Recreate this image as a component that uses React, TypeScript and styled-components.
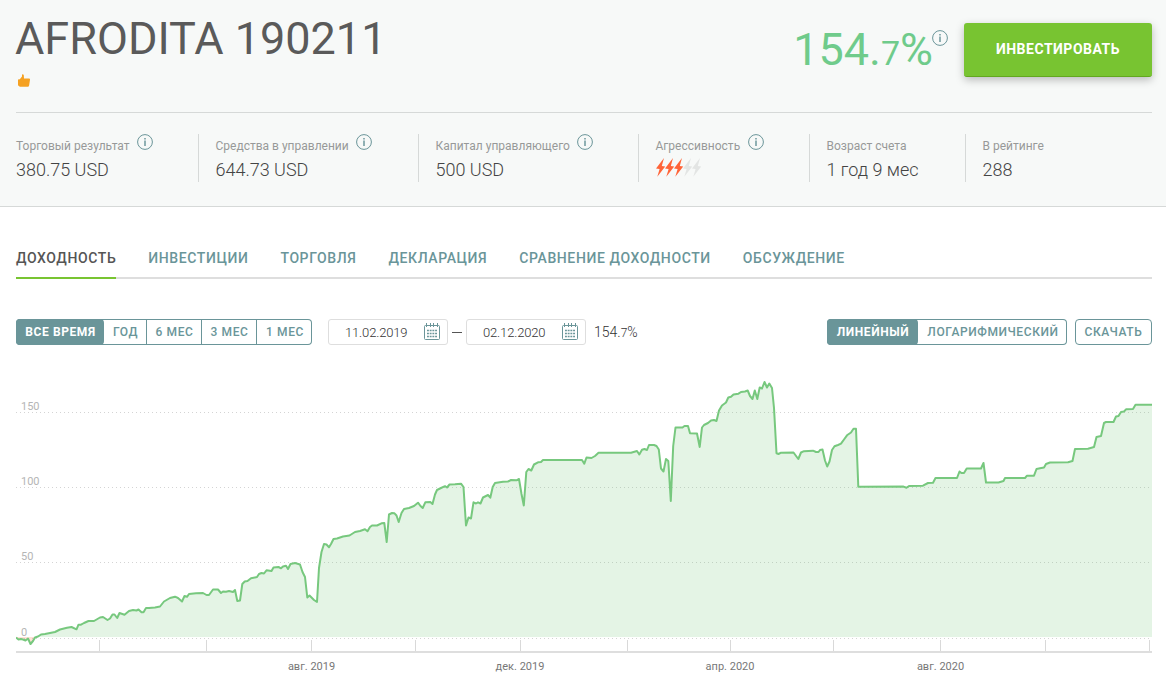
import { useState } from "react";
import styled, { createGlobalStyle } from "styled-components";

const stats = [
  { label: "Торговый результат", value: "380.75 USD", width: 182, info: true },
  { label: "Средства в управлении", value: "644.73 USD", width: 220, info: true },
  { label: "Капитал управляющего", value: "500 USD", width: 220, info: true },
  { label: "Агрессивность", level: 3, width: 171, info: true },
  { label: "Возраст счета", value: "1 год 9 мес", width: 156 },
  { label: "В рейтинге", value: "288", width: 187 },
];

const tabs = [
  "Доходность",
  "Инвестиции",
  "Торговля",
  "Декларация",
  "Сравнение доходности",
  "Обсуждение",
];

const periods = [
  { label: "Все время", width: 88 },
  { label: "Год", width: 43 },
  { label: "6 мес", width: 55 },
  { label: "3 мес", width: 55 },
  { label: "1 мес", width: 55 },
];

const scales = [
  { label: "Линейный", width: 91 },
  { label: "Логарифмический", width: 149 },
];

const CHART_LEFT = 16;
const CHART_TOP = 366;
const ZERO_Y = 637;

const line: [number, number][] = [
  [16, 637.5], [18.5, 639.5], [21, 639], [23, 639.5], [25.5, 640.5], [28, 638.5], [30.5, 644], [33, 641],
  [35, 637.5], [38, 636.5], [41, 634.5], [45, 634], [50, 633], [55, 632], [60, 629.5], [67, 627.8],
  [71.5, 627], [76.5, 629.3], [78.5, 624.7], [81, 624.7], [84, 623], [88.5, 621], [94, 621], [100, 617.5],
  [103, 617], [107.5, 620], [110, 618.5], [112.5, 614.5], [114.5, 614.5], [117.2, 618], [119.5, 613],
  [124.5, 614.7], [129, 611], [133, 610], [136.5, 610.5], [138.5, 609.5], [141.5, 612.3], [143.5, 612.3],
  [146, 608], [149, 608], [155, 607.5], [160, 606.5], [164, 601.5], [170, 598], [175, 596.7], [178, 598],
  [182, 601.5], [184.5, 596], [187, 596.8], [189, 594], [196, 593.3], [203, 593], [206.5, 595], [209, 595],
  [213, 589.5], [218, 589.5], [221, 593], [223, 591.5], [226, 591.7], [229, 591], [233, 592], [235, 590],
  [237.3, 601], [240, 600.5], [242.3, 584], [244.7, 581.5], [247.5, 581], [251, 578.3], [257, 577],
  [259, 574], [261.5, 573], [264, 573.5], [266.5, 570.3], [271.5, 571], [273.5, 567.5], [278.5, 567],
  [281, 568.3], [283, 566.5], [286, 565.8], [288, 569], [290.5, 564], [295, 563], [300, 564.5],
  [302.5, 572], [305, 577], [307.3, 597.5], [309.5, 595.5], [314, 600], [317, 602], [319, 568],
  [321.5, 552], [324, 544], [326.5, 544.5], [329, 547.3], [331, 544], [333.5, 539], [337, 538.5],
  [343, 536.5], [349.5, 535.5], [355, 532], [360, 531], [365, 529.3], [367.5, 531.3], [370, 527],
  [372, 525.5], [377, 525.5], [381.5, 523.3], [384.3, 523], [386.7, 542], [389, 514.5], [392, 513],
  [394.5, 513.3], [396.5, 515.5], [398.7, 522], [401.5, 513], [404, 509], [409, 508], [414, 506],
  [418, 502.7], [420.5, 506], [422.7, 508], [425.3, 502.3], [430.3, 502], [432.5, 504], [435, 494.5],
  [437, 490], [441, 488], [445, 486.2], [447, 487.5], [449.5, 484.5], [455, 484.3], [461, 483.7],
  [463.5, 487], [466, 525.5], [468.5, 517.5], [471, 518.5], [473.5, 502.3], [476, 503.5], [478, 502.3],
  [480.5, 503.5], [483, 497.5], [488, 495], [490.3, 497.7], [492.7, 487], [495, 483], [503, 481.7],
  [508, 481.5], [511, 480], [516.5, 480.3], [519, 479], [521.5, 494], [523.8, 505.5], [526.3, 472],
  [528.5, 469], [531.3, 470.5], [534, 464.5], [538, 462.3], [541, 462], [543, 460], [582, 460],
  [584.3, 463.7], [586.5, 457.5], [591.5, 458], [595, 456], [598.5, 452.8], [631, 452.8], [637, 451],
  [639.3, 454.5], [642, 449.8], [644.5, 449], [647, 450], [649, 445], [654, 445], [656.5, 446],
  [658.8, 449.5], [661, 468.5], [663.5, 471.5], [666, 459], [668.3, 461], [670.8, 501], [673.2, 446],
  [675.5, 427.5], [682.5, 427.5], [684.5, 426], [688, 426], [690, 433.3], [697, 433.5], [699.7, 447],
  [702, 427.5], [704, 425], [708, 423], [711, 420.5], [714, 420], [716.5, 421], [719, 410.5],
  [722, 405.5], [726, 402.5], [728.3, 397.5], [731, 396.8], [733.5, 394.5], [738.5, 393.7], [741, 392],
  [745, 391.5], [747.7, 390.5], [750, 396], [752.5, 399], [754.8, 390.5], [757.3, 399], [759.7, 387.5],
  [762, 388.5], [764.5, 382], [767, 387.5], [769.3, 383.5], [772, 388], [774, 408], [776.5, 453.3],
  [778.5, 454], [781, 452.7], [793.5, 452.5], [798.3, 459], [801, 452.5], [804, 451.2], [813, 450.7],
  [816, 452], [818.5, 452], [820, 450], [822.5, 449.5], [825, 460.5], [827.2, 466.5], [829.5, 461.5],
  [832, 450], [834.5, 446.3], [838, 445], [841, 443.7], [844, 439.5], [847, 435.3], [851, 432.5],
  [853.5, 428.7], [856, 428.7], [858.3, 486.8], [903.5, 486.6], [906.5, 487.8], [909, 486], [923, 485.7],
  [928, 483], [933, 482.7], [935.5, 478], [957, 478], [959.5, 471.5], [961.5, 473], [964, 473],
  [966.7, 468.5], [981, 468.5], [983.5, 463], [986, 482.5], [998.5, 482.5], [1003.5, 481], [1005, 478],
  [1025, 478], [1027, 475.7], [1034, 475.7], [1036.5, 469], [1040, 468.3], [1044, 467.5], [1046, 464],
  [1050, 462.5], [1068, 462.3], [1072.5, 461], [1075, 449], [1088, 448.7], [1094, 447], [1096.5, 437],
  [1101, 436], [1104, 423], [1106, 422], [1113.5, 422], [1116, 416.5], [1118.5, 416], [1121, 412],
  [1124, 411.5], [1126, 409.3], [1133, 409], [1135.5, 404.7], [1152, 404.7],
];

const grid = [
  { label: "150", y: 412.5 },
  { label: "100", y: 487.5 },
  { label: "50", y: 562.5 },
  { label: "0", y: 638.5 },
];

const ticks = [99, 206, 311, 415, 520, 627, 730, 833, 940, 1045, 1149];

const months = [
  { label: "авг. 2019", x: 311.5 },
  { label: "дек. 2019", x: 520 },
  { label: "апр. 2020", x: 730 },
  { label: "авг. 2020", x: 940.5 },
];

function InfoIcon() {
  return (
    <InfoSvg width="16" height="16" viewBox="0 0 16 16">
      <circle cx="8" cy="8" r="7.4" fill="none" stroke="#6a9599" />
      <path d="M7 4h2v1.4H7zM7 6.4h2V12H7z" fill="#8fb0b3" />
    </InfoSvg>
  );
}

function CalendarIcon() {
  return (
    <svg width="17" height="18" viewBox="0 0 17 18" fill="none" stroke="#6a9599">
      <rect x="0.5" y="2.5" width="15" height="14" rx="1" />
      <path d="M2.5 0v4M6.5 0v4M9.5 0v4M13.5 0v4" />
      <path d="M3 7.5h10M3 10.5h10M3 13.5h10" strokeWidth="1.6" strokeDasharray="1.9 0.8" />
    </svg>
  );
}

function Bolts({ level }: { level: number }) {
  return (
    <svg width="46" height="20" viewBox="0 0 46 20">
      {[0, 1, 2, 3, 4].map((i) => (
        <path
          key={i}
          d="M8 0 0 10.4 3.6 11 1.3 18.8 9.2 8.4 5.8 7.9z"
          transform={`translate(${i * 9} 0)`}
          fill={i < level ? "#ff6438" : "#e3e5e4"}
        />
      ))}
    </svg>
  );
}

function Chart() {
  const points = line.map(([x, y]) => `${x},${y}`).join(" ");
  const area = `16,${ZERO_Y} ${points} 1152,${ZERO_Y}`;

  return (
    <ChartSvg viewBox={`${CHART_LEFT} ${CHART_TOP} 1136 312`}>
      <defs>
        <clipPath id="profit">
          <rect x="16" y="366" width="1136" height={ZERO_Y - 366} />
        </clipPath>
        <clipPath id="loss">
          <rect x="16" y={ZERO_Y} width="1136" height="20" />
        </clipPath>
      </defs>
      {grid.map((g) => (
        <GridLine key={g.label} x1="16" x2="1152" y1={g.y} y2={g.y} />
      ))}
      <polygon points={area} fill="rgba(119, 200, 126, 0.2)" clipPath="url(#profit)" />
      <polygon points={area} fill="rgba(255, 100, 56, 0.2)" clipPath="url(#loss)" />
      {grid.map((g) => (
        <AxisLabel key={g.label} x="21" y={g.y - 2.5}>
          {g.label}
        </AxisLabel>
      ))}
      {ticks.map((x) => (
        <rect key={x} x={x} y="640" width="1" height="11" fill="#d9d9d9" />
      ))}
      <rect x="16" y="651" width="1136" height="2" fill="#dedede" />
      <polyline points={points} fill="none" stroke="#77c87e" strokeWidth="2" strokeLinejoin="round" />
      {months.map((m) => (
        <MonthLabel key={m.label} x={m.x} y="670" textAnchor="middle">
          {m.label}
        </MonthLabel>
      ))}
    </ChartSvg>
  );
}

export default function App() {
  const [tab, setTab] = useState(tabs[0]);
  const [period, setPeriod] = useState(periods[0].label);
  const [scale, setScale] = useState(scales[0].label);

  return (
    <>
      <GlobalStyle />
      <Header>
        <TitleRow>
          <div>
            <Title>AFRODITA 190211</Title>
            <ThumbSvg width="12" height="13" viewBox="0 0 12 13">
              <path
                d="M0 5.6 1.8 5.2 4 2.6V.8C4 0 5.6 0 5.8 1.2L6 4.6h5.2c.6 0 .9.5.8 1.1l-.9 5.7c-.2.8-.7 1.3-1.5 1.3H2.6C1.7 12.7.6 12 0 11.2z"
                fill="#f5a122"
              />
            </ThumbSvg>
          </div>
          <Summary>
            <Percent>
              154.<small>7</small>%
            </Percent>
            <PercentInfo>
              <InfoIcon />
            </PercentInfo>
            <InvestButton>Инвестировать</InvestButton>
          </Summary>
        </TitleRow>
        <Stats>
          {stats.map((s) => (
            <Stat key={s.label} $width={s.width}>
              <StatLabel>
                {s.label}
                {s.info && <InfoIcon />}
              </StatLabel>
              {s.level ? <Bolts level={s.level} /> : <StatValue>{s.value}</StatValue>}
            </Stat>
          ))}
        </Stats>
      </Header>
      <Main>
        <Tabs>
          {tabs.map((t) => (
            <Tab key={t} $active={t === tab} onClick={() => setTab(t)}>
              {t}
            </Tab>
          ))}
        </Tabs>
        <Toolbar>
          <Segments>
            {periods.map((p) => (
              <Segment
                key={p.label}
                $width={p.width}
                $active={p.label === period}
                onClick={() => setPeriod(p.label)}
              >
                {p.label}
              </Segment>
            ))}
          </Segments>
          <Dates>
            <DateField>
              11.02.2019
              <CalendarIcon />
            </DateField>
            <Dash />
            <DateField>
              02.12.2020
              <CalendarIcon />
            </DateField>
            <PeriodResult>
              154.<small>7</small>%
            </PeriodResult>
          </Dates>
          <Segments>
            {scales.map((s) => (
              <Segment
                key={s.label}
                $width={s.width}
                $active={s.label === scale}
                onClick={() => setScale(s.label)}
              >
                {s.label}
              </Segment>
            ))}
          </Segments>
          <Download>Скачать</Download>
        </Toolbar>
        <Chart />
      </Main>
    </>
  );
}

const GlobalStyle = createGlobalStyle`
  * {
    box-sizing: border-box;
  }

  body {
    margin: 0;
    background: #ffffff;
    color: #555555;
    font-family: Roboto, "Liberation Sans", sans-serif;
  }

  button {
    font-family: inherit;
    padding: 0;
    cursor: pointer;
  }
`;

const Header = styled.header`
  height: 207px;
  padding: 0 14px 0 16px;
  background: #f7f9f8;
  border-bottom: 1px solid #d6d9d8;
`;

const TitleRow = styled.div`
  display: flex;
  justify-content: space-between;
  height: 113px;
  border-bottom: 1px solid #d6d9d8;
`;

const Title = styled.h1`
  margin: 12px 0 0 -1px;
  font-size: 45px;
  line-height: 54px;
  font-weight: 400;
  color: #5a5a5a;
`;

const ThumbSvg = styled.svg`
  display: block;
  margin: 8px 0 0 2px;
`;

const Summary = styled.div`
  display: flex;
  align-items: flex-start;
  padding-top: 23px;
`;

const Percent = styled.div`
  margin-right: -1px;
  font-size: 45px;
  line-height: 53px;
  color: #6fcb8b;

  small {
    font-size: 34px;
  }
`;

const PercentInfo = styled.div`
  padding-top: 7px;
`;

const InfoSvg = styled.svg`
  flex: none;
  display: block;
`;

const InvestButton = styled.button`
  width: 188px;
  height: 54px;
  margin-left: 16px;
  padding-bottom: 1px;
  border: 0;
  border-bottom: 1px solid #62a81f;
  border-radius: 3px;
  background: #78c431;
  box-shadow: 0 3px 8px rgba(0, 0, 0, 0.25);
  color: #ffffff;
  font-size: 14px;
  font-weight: 700;
  letter-spacing: 0.5px;
  text-transform: uppercase;
`;

const Stats = styled.div`
  display: flex;
  padding-top: 21px;
`;

const Stat = styled.div<{ $width: number }>`
  width: ${({ $width }) => $width}px;
  height: 48px;

  & + & {
    padding-left: 16.5px;
    border-left: 1px solid #d6d9d8;
  }
`;

const StatLabel = styled.div`
  display: flex;
  gap: 7.5px;
  height: 24px;
  font-size: 12px;
  line-height: 24px;
  color: #979999;
`;

const StatValue = styled.div`
  font-size: 18px;
  line-height: 24px;
  font-weight: 300;
  color: #444444;
`;

const Main = styled.main`
  padding: 38px 14px 0 16px;
`;

const Tabs = styled.nav`
  display: flex;
  gap: 32px;
  height: 34px;
  border-bottom: 2px solid #dedede;
`;

const Tab = styled.button<{ $active: boolean }>`
  height: 34px;
  padding-bottom: 6px;
  border: 0;
  border-bottom: 2px solid ${({ $active }) => ($active ? "#78c431" : "transparent")};
  background: none;
  color: ${({ $active }) => ($active ? "#555555" : "#6a9599")};
  font-size: 14px;
  font-weight: 500;
  letter-spacing: 0.6px;
  text-transform: uppercase;
  white-space: nowrap;
`;

const Toolbar = styled.div`
  display: flex;
  align-items: center;
  height: 26px;
  margin-top: 40px;
`;

const Segments = styled.div`
  display: flex;
  height: 26px;
  border-radius: 4px;
  box-shadow: inset 0 0 0 1px #6a9599;
`;

const Segment = styled.button<{ $width: number; $active: boolean }>`
  width: ${({ $width }) => $width}px;
  padding-left: 1px;
  border: 0;
  border-radius: ${({ $active }) => ($active ? "4px" : "0")};
  background: ${({ $active }) => ($active ? "#6a9599" : "none")};
  color: ${({ $active }) => ($active ? "#ffffff" : "#6a9599")};
  font-size: 12px;
  font-weight: ${({ $active }) => ($active ? 700 : 500)};
  letter-spacing: 0.6px;
  text-transform: uppercase;

  &:not(:last-child) {
    border-right: ${({ $active }) => ($active ? "0" : "1px solid #6a9599")};
  }
`;

const Dates = styled.div`
  display: flex;
  align-items: center;
  flex: 1;
  margin-left: 16px;
`;

const DateField = styled.div`
  display: flex;
  align-items: center;
  justify-content: space-between;
  width: 120px;
  height: 26px;
  padding: 0 6px 0 16px;
  border: 1px solid #dedede;
  border-radius: 3px;
  font-size: 13px;
  font-weight: 300;
  letter-spacing: -0.15px;
  color: #333333;
`;

const Dash = styled.span`
  width: 10px;
  height: 1px;
  margin: 0 4px;
  background: #555555;
`;

const PeriodResult = styled.div`
  margin-left: 8px;
  font-size: 14px;
  font-weight: 300;
  color: #333333;

  small {
    font-size: 12px;
  }
`;

const Download = styled.button`
  width: 77px;
  height: 26px;
  margin-left: 8px;
  border: 1px solid #6a9599;
  border-radius: 4px;
  background: none;
  color: #6a9599;
  font-size: 12px;
  font-weight: 500;
  letter-spacing: 0.6px;
  text-transform: uppercase;
`;

const ChartSvg = styled.svg`
  display: block;
  width: 1136px;
  height: 312px;
  margin-top: 21px;
`;

const GridLine = styled.line`
  stroke: #d4d4d4;
  stroke-dasharray: 1 3;
`;

const AxisLabel = styled.text`
  fill: #b5b5b5;
  font-size: 11px;
`;

const MonthLabel = styled.text`
  fill: #777777;
  font-size: 11px;
`;
